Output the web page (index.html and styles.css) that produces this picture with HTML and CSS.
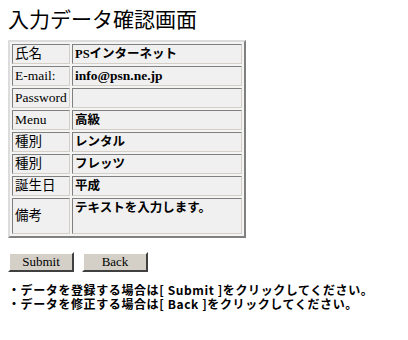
FILE: index.html
```html
<!DOCTYPE html>
<html>

<head>
  <meta charset="utf-8">
  <title>入力データ確認画面</title>
  <link rel="stylesheet" href="styles.css">
</head>

<body>

  <h1 class="page-title">入力データ確認画面</h1>

  <table class="confirm-table">
    <tr>
      <td class="label">氏名</td>
      <td class="value">PSインターネット</td>
    </tr>
    <tr>
      <td class="label">E-mail:</td>
      <td class="value"><span class="latin">info@psn.ne.jp</span></td>
    </tr>
    <tr>
      <td class="label">Password</td>
      <td class="value"></td>
    </tr>
    <tr>
      <td class="label">Menu</td>
      <td class="value">高級</td>
    </tr>
    <tr>
      <td class="label">種別</td>
      <td class="value">レンタル</td>
    </tr>
    <tr>
      <td class="label">種別</td>
      <td class="value">フレッツ</td>
    </tr>
    <tr>
      <td class="label">誕生日</td>
      <td class="value">平成</td>
    </tr>
    <tr>
      <td class="label">備考</td>
      <td class="value value-memo">テキストを入力します。</td>
    </tr>
  </table>

  <form class="btn-row">
    <button type="button" class="btn">Submit</button>
    <button type="button" class="btn">Back</button>
  </form>

  <p class="note">・データを登録する場合は[ Submit ]をクリックしてください。</p>
  <p class="note">・データを修正する場合は[ Back ]をクリックしてください。</p>

</body>

</html>
```

FILE: styles.css
```css
body {
  margin: 8px;
  background-color: white;
  color: black;
  font-family: "Liberation Serif", "Noto Sans CJK JP", serif;
}

.page-title {
  font-size: 21px;
  font-weight: normal;
  line-height: 24px;
  margin: 0 0 8px 0;
}

.confirm-table {
  width: 238px;
  border-collapse: separate;
  border-spacing: 2px;
  border-style: solid;
  border-width: 2px;
  border-color: #dcdcdc #808080 #808080 #dcdcdc;
  background-color: #f4f4f4;
  font-size: 13px;
}

.confirm-table td {
  height: 16px;
  padding: 1px 2px;
  line-height: 16px;
  border: 1px solid;
  border-color: #808080 #d4d0c8 #d4d0c8 #808080;
  background-color: #f0f0f0;
  white-space: nowrap;
}

.label {
  width: 52px;
  font-size: 13.5px;
}

.value {
  font-weight: bold;
  font-size: 12.5px;
  font-family: "Liberation Serif", "Noto Sans CJK JP", sans-serif;
}

.latin {
  font-size: 13.5px;
}

.value-memo {
  height: 32px !important;
  vertical-align: top;
}

.btn-row {
  margin: 14px 0 0 0;
  display: flex;
  gap: 8px;
}

.btn {
  width: 66px;
  height: 20px;
  padding: 0;
  font-family: "Liberation Serif", serif;
  font-size: 13px;
  background-color: #d4d0c8;
  border: 2px solid;
  border-color: #ffffff #404040 #404040 #ffffff;
  color: black;
}

.note {
  margin: 0;
  font-size: 12px;
  line-height: 14px;
  letter-spacing: 0.6px;
  font-weight: bold;
  font-family: "Noto Sans CJK JP", sans-serif;
}

.btn-row + .note {
  margin-top: 11px;
}
```
